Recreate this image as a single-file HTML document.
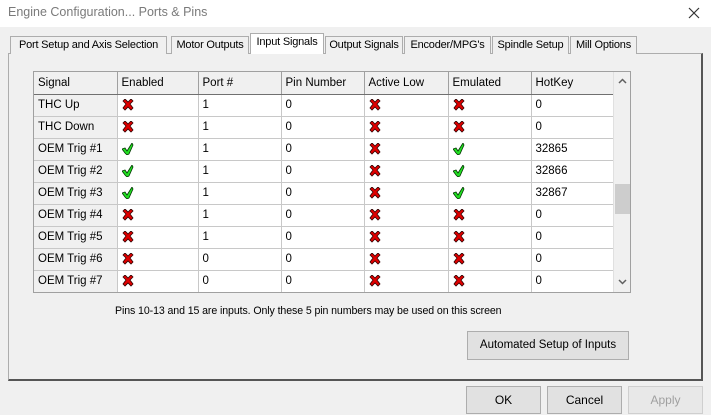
<!DOCTYPE html>
<html><head><style>
*{box-sizing:border-box;margin:0;padding:0}
body{width:711px;height:415px;overflow:hidden;background:#f0f0f0;font-family:"Liberation Sans",sans-serif;font-size:12px;color:#000;position:relative}
.abs{position:absolute}
.title{left:0;top:0;width:711px;height:27px;background:#fff;}
.title span{position:absolute;left:8px;top:5px;font-size:12.5px;color:#7a7a7a}
.tab{position:absolute;top:36px;height:18px;border:1px solid #adadad;border-bottom:none;background:#f0f0f0;text-align:center;line-height:16px;font-size:11px;letter-spacing:-0.2px;white-space:nowrap;overflow:hidden}
.tab.sel{top:33px;height:21px;background:#fff;z-index:2;border-color:#adadad}
.panel{left:8px;top:53px;width:695px;height:328px;border:1px solid #adadad;border-right:2px solid #555;border-bottom:2px solid #555;background:#f0f0f0}
.grid{left:33px;top:71px;width:598px;height:222px;border:1px solid #a0a0a0;background:#fff;overflow:hidden}
table{border-collapse:collapse;position:absolute;left:0;top:0}
td{height:22px;border-right:1px solid #c8c8c8;border-bottom:1px solid #c8c8c8;padding:0 0 0 4px;vertical-align:middle;font-size:11.5px}
td.s{background:#f0f0f0}
tr.h td{background:#f0f0f0;border-right:1px solid #a0a0a0;border-bottom:1px solid #707070}
.sb{left:579px;top:0;width:18px;height:220px;background:#f0f0f0;border-left:1px solid #e0e0e0}
.btn{position:absolute;border:1px solid #adadad;background:#e1e1e1;text-align:center;font-size:12px}
svg{display:block}
</style></head><body>
<div class="abs title"><span>Engine Configuration... Ports &amp; Pins</span>
<svg class="abs" style="left:688px;top:7px" width="12" height="12"><path d="M1 1L11 11M11 1L1 11" stroke="#333" stroke-width="1.2"/></svg></div>

<div class="abs panel"></div>
<div class="tab" style="left:10px;width:157px">Port Setup and Axis Selection</div>
<div class="tab" style="left:171px;width:78px">Motor Outputs</div>
<div class="tab sel" style="left:250px;width:74px">Input Signals</div>
<div class="tab" style="left:325px;width:78px">Output Signals</div>
<div class="tab" style="left:404px;width:87px">Encoder/MPG's</div>
<div class="tab" style="left:492px;width:77px">Spindle Setup</div>
<div class="tab" style="left:570px;width:67px">Mill Options</div>

<svg width="0" height="0" style="position:absolute"><defs>
<g id="x"><path d="M1 2L3 0L6 3L9 0L11 2L8 5L11 9L9 11L6 8L3 11L1 9L4 5Z" fill="#e00000" stroke="#300" stroke-width="0.8"/></g>
<g id="c"><path d="M0 6L3 5L5 8L10 0L11 2L7 11L5 12L3 10Z" fill="#22e022" stroke="#030" stroke-width="0.8"/></g>
</defs></svg>

<div class="abs grid">
<table>
<tr class="h"><td style="width:83px">Signal</td><td style="width:81px">Enabled</td><td style="width:83px">Port #</td><td style="width:83px">Pin Number</td><td style="width:84px">Active Low</td><td style="width:83px">Emulated</td><td style="width:83px">HotKey</td></tr>
<tr><td class="s">THC Up</td><td><svg width="12" height="12"><use href="#x"/></svg></td><td>1</td><td>0</td><td><svg width="12" height="12"><use href="#x"/></svg></td><td><svg width="12" height="12"><use href="#x"/></svg></td><td>0</td></tr>
<tr><td class="s">THC Down</td><td><svg width="12" height="12"><use href="#x"/></svg></td><td>1</td><td>0</td><td><svg width="12" height="12"><use href="#x"/></svg></td><td><svg width="12" height="12"><use href="#x"/></svg></td><td>0</td></tr>
<tr><td class="s">OEM Trig #1</td><td><svg width="12" height="12"><use href="#c"/></svg></td><td>1</td><td>0</td><td><svg width="12" height="12"><use href="#x"/></svg></td><td><svg width="12" height="12"><use href="#c"/></svg></td><td>32865</td></tr>
<tr><td class="s">OEM Trig #2</td><td><svg width="12" height="12"><use href="#c"/></svg></td><td>1</td><td>0</td><td><svg width="12" height="12"><use href="#x"/></svg></td><td><svg width="12" height="12"><use href="#c"/></svg></td><td>32866</td></tr>
<tr><td class="s">OEM Trig #3</td><td><svg width="12" height="12"><use href="#c"/></svg></td><td>1</td><td>0</td><td><svg width="12" height="12"><use href="#x"/></svg></td><td><svg width="12" height="12"><use href="#c"/></svg></td><td>32867</td></tr>
<tr><td class="s">OEM Trig #4</td><td><svg width="12" height="12"><use href="#x"/></svg></td><td>1</td><td>0</td><td><svg width="12" height="12"><use href="#x"/></svg></td><td><svg width="12" height="12"><use href="#x"/></svg></td><td>0</td></tr>
<tr><td class="s">OEM Trig #5</td><td><svg width="12" height="12"><use href="#x"/></svg></td><td>1</td><td>0</td><td><svg width="12" height="12"><use href="#x"/></svg></td><td><svg width="12" height="12"><use href="#x"/></svg></td><td>0</td></tr>
<tr><td class="s">OEM Trig #6</td><td><svg width="12" height="12"><use href="#x"/></svg></td><td>0</td><td>0</td><td><svg width="12" height="12"><use href="#x"/></svg></td><td><svg width="12" height="12"><use href="#x"/></svg></td><td>0</td></tr>
<tr><td class="s">OEM Trig #7</td><td><svg width="12" height="12"><use href="#x"/></svg></td><td>0</td><td>0</td><td><svg width="12" height="12"><use href="#x"/></svg></td><td><svg width="12" height="12"><use href="#x"/></svg></td><td>0</td></tr>
</table>
<div class="abs sb">
<svg class="abs" style="left:4px;top:6px" width="9" height="6"><path d="M1 5L4.5 1.5L8 5" stroke="#606060" stroke-width="1.5" fill="none"/></svg>
<div class="abs" style="left:1px;top:112px;width:15px;height:30px;background:#cdcdcd"></div>
<svg class="abs" style="left:4px;top:207px" width="9" height="6"><path d="M1 1L4.5 4.5L8 1" stroke="#606060" stroke-width="1.5" fill="none"/></svg>
</div>
</div>

<div class="abs" style="left:115px;top:305px;font-size:10.6px;letter-spacing:-0.1px">Pins 10-13 and 15 are inputs. Only these 5 pin numbers may be used on this screen</div>
<div class="btn" style="left:467px;top:331px;width:162px;height:29px;line-height:27px;font-size:11.5px">Automated Setup of Inputs</div>
<div class="btn" style="left:466px;top:386px;width:75px;height:28px;line-height:26px">OK</div>
<div class="btn" style="left:547px;top:386px;width:75px;height:28px;line-height:26px">Cancel</div>
<div class="btn" style="left:628px;top:386px;width:75px;height:28px;line-height:26px;color:#a0a0a0;background:#e8e8e8;border-color:#cfcfcf">Apply</div>
</body></html>
